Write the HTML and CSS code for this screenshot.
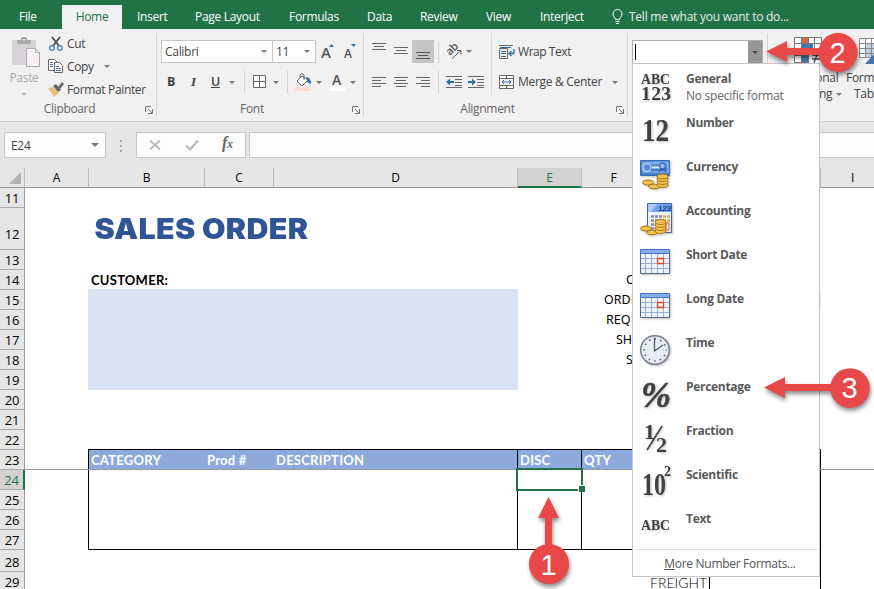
FILE: index.html
```html
<!DOCTYPE html>
<html lang="en">
<head>
<meta charset="utf-8">
<title>Sales Order - Excel</title>
<link rel="stylesheet" href="styles.css">
</head>
<body>
<div class="window">
  <nav class="tabs">
    <span class="tab-file">File</span>
    <span class="tab-home">Home</span>
    <span>Insert</span>
    <span>Page Layout</span>
    <span>Formulas</span>
    <span>Data</span>
    <span>Review</span>
    <span>View</span>
    <span>Interject</span>
    <svg class="bulb" width="12" height="16" viewBox="0 0 12 16" fill="none" stroke="#fff"><path d="M3.5 10.500C3.500 8.500 1 8 1 5a4.500 4.500 0 0 1 9 0C10 8 7.500 8.500 7.500 10.500zM3.500 12.500h4M4 14.500h3"/></svg>
    <span class="tell">Tell me what you want to do...</span>
  </nav>

  <div class="ribbon">
    <section class="group clipboard">
      <div class="group-body clip-body">
        <div class="paste">
          <svg width="28" height="31" viewBox="0 0 28 31"><rect y="3" width="24" height="25" rx="1" fill="#d8d5d8"/><path d="M5 7V3h4V1.500q0-1.500 1.500-1.500h3Q15 0 15 1.500V3h4v4z" fill="#ababab"/><circle cx="12" cy="2.800" r="1" fill="#eee"/><path d="M14.500 11.500h9l4 4v14h-13z" fill="#f7f0f7" stroke="#aaa"/><path d="M23.500 11.500v4h4" fill="none" stroke="#aaa"/></svg>
          <span>Paste</span>
          <i class="arr"></i>
        </div>
        <div class="clip-list">
          <div><svg width="16" height="16" viewBox="0 0 16 16" fill="none"><path d="M4 1l7 9M12 1L5 10" stroke="#555" stroke-width="2"/><circle cx="4" cy="12" r="2.400" stroke="#4a81b8" stroke-width="1.300"/><circle cx="11.800" cy="12" r="2.400" stroke="#4a81b8" stroke-width="1.300"/></svg><span>Cut</span></div>
          <div><svg width="16" height="16" viewBox="0 0 16 16"><g fill="#fff" stroke="#666"><path d="M.5.500h6l3 3v8h-9z"/><path d="M6.500 3.500h5l3 3v7h-8z"/></g><path d="M2 3.500h3M2 5.500h3M2 7.500h3M8 7.500h3M8 9.500h5M8 11.500h5" stroke="#3f78b5"/></svg><span>Copy</span><i class="arr"></i></div>
          <div><svg width="16" height="16" viewBox="0 0 16 16"><path d="M0 6l5-1 6 6-5 4z" fill="#eabf7c"/><path d="M5 4l3-2 5 6-3 2z" fill="#666"/><path d="M10 5l4-5 2 2-4 5z" fill="#666"/></svg><span>Format Painter</span></div>
        </div>
      </div>
      <div class="group-foot clip-foot"><span>Clipboard</span><svg class="launch" width="8" height="8" viewBox="0 0 8 8"><path d="M.5 6V.500H6M3 3l4 4M7.500 3v4.500H3" fill="none" stroke="#777"/></svg></div>
    </section>

    <section class="group font">
      <div class="group-body">
        <div class="row-a font-a">
          <div class="box face"><span>Calibri</span><i class="arr"></i></div>
          <div class="box size"><span>11</span><i class="arr"></i></div>
          <svg width="14" height="18" viewBox="0 0 14 18"><text x="0" y="15" class="ico-a" font-size="15">A</text><path d="M8 4l2.500-3L13 4z" fill="#2f6cad"/></svg>
          <svg width="14" height="18" viewBox="0 0 14 18"><text x="0" y="15" class="ico-a" font-size="12">A</text><path d="M7 1h5L9.500 4z" fill="#2f6cad"/></svg>
        </div>
        <div class="row-b font-b">
          <b>B</b><em>I</em><u>U</u><i class="arr"></i><i class="sep"></i>
          <svg width="14" height="14" viewBox="0 0 14 14" fill="#fff" stroke="#666"><path d="M.5.500h12v12H.500zM6.500.500v12M.500 6.500h12"/></svg>
          <i class="arr"></i><i class="sep"></i>
          <svg width="17" height="18" viewBox="0 0 17 18"><path d="M0 14h16v4H0z" fill="#fbdfd3"/><path d="M11 4q5 0 5 7l-4-2z" fill="#2f6cad"/><path d="M7 3L2 8l5 5 6-6z" fill="#fff" stroke="#666"/><path d="M5 5V2q2-3 4 0v5" fill="none" stroke="#666"/></svg>
          <i class="arr"></i>
          <svg width="16" height="18" viewBox="0 0 16 18"><text x="3" y="12" class="ico-a" font-size="14">A</text><path d="M0 14h16v4H0z" fill="#fff"/></svg>
          <i class="arr"></i>
        </div>
      </div>
      <div class="group-foot"><span>Font</span><svg class="launch" width="8" height="8" viewBox="0 0 8 8"><path d="M.5 6V.500H6M3 3l4 4M7.500 3v4.500H3" fill="none" stroke="#777"/></svg></div>
    </section>

    <section class="group align">
      <div class="group-body align-body">
        <div class="align-left">
          <div class="row-a align-a">
            <svg width="14" height="23" viewBox="0 0 14 23" stroke="#666"><path d="M0 3.500h14M2 6.500h10M0 9.500h14"/></svg>
            <svg width="14" height="23" viewBox="0 0 14 23" stroke="#666"><path d="M0 7.500h14M2 10.500h10M0 13.500h14"/></svg>
            <svg class="pressed" width="22" height="23" viewBox="0 0 22 23" stroke="#555"><path d="M4 12.500h14M6 15.500h10M4 18.500h14"/></svg>
            <i class="sep"></i>
            <svg width="17" height="16" viewBox="0 0 17 16"><text x="0" y="0" transform="translate(4 12) rotate(-45)" class="ico-ab">ab</text><path d="M6 14.500l9-8M11 6.500h4v4" fill="none" stroke="#555"/></svg>
            <i class="arr"></i>
          </div>
          <div class="row-b align-b">
            <svg width="14" height="12" viewBox="0 0 14 12" stroke="#666"><path d="M0 1.500h14M0 4.500h9M0 7.500h14M0 10.500h9"/></svg>
            <svg width="14" height="12" viewBox="0 0 14 12" stroke="#666"><path d="M0 1.500h14M2 4.500h10M0 7.500h14M2 10.500h10"/></svg>
            <svg width="14" height="12" viewBox="0 0 14 12" stroke="#666"><path d="M0 1.500h14M5 4.500h9M0 7.500h14M5 10.500h9"/></svg>
            <i class="sep"></i>
            <svg width="16" height="14" viewBox="0 0 16 14"><path d="M0 1.500h16M9 4.500h7M9 7.500h7M9 10.500h7M0 12.500h16" stroke="#666"/><path d="M0 7l4-3.500V6h4v2H4v2.500z" fill="#2f6cad"/></svg>
            <svg width="16" height="14" viewBox="0 0 16 14"><path d="M0 1.500h16M9 4.500h7M9 7.500h7M9 10.500h7M0 12.500h16" stroke="#666"/><path d="M8 7L4 3.500V6H0v2h4v2.500z" fill="#2f6cad"/></svg>
          </div>
        </div>
        <div class="align-right">
          <div class="row-a"><svg width="16" height="16" viewBox="0 0 16 16" fill="none"><path d="M0 1.500h14M.5 4.500h8v10h-8zM2 7.500h5M2 9.500h4M2 12.500h5" stroke="#666"/><path d="M1 3.500h11M2 7.500h5M2 9.500h5" stroke="#2f6cad"/><path d="M15 5v4.500h-5M12.500 7L10 9.500l2.500 2.500" stroke="#2f6cad" stroke-width="1.400"/></svg><span>Wrap Text</span></div>
          <div class="row-b"><svg width="15" height="16" viewBox="0 0 15 16" fill="#fff" stroke="#666"><path d="M.5 1.500h14v13H.500zM.500 4.500h14M.500 11.500h14M7.500 1.500v3M7.500 11.500v3"/><path d="M3 8h9M5 6L3 8l2 2M10 6l2 2-2 2" fill="none" stroke="#2f6cad"/></svg><span class="t-merge">Merge &amp; Center</span><i class="arr"></i></div>
        </div>
      </div>
      <div class="group-foot"><span>Alignment</span><svg class="launch" width="8" height="8" viewBox="0 0 8 8"><path d="M.5 6V.500H6M3 3l4 4M7.500 3v4.500H3" fill="none" stroke="#777"/></svg></div>
    </section>

    <section class="group number">
      <div class="combo"><span class="caret"></span><span class="combo-btn"><i class="arr"></i></span></div>
    </section>

    <section class="group styles">
      <div class="style-btn">
        <svg width="28" height="26" viewBox="0 0 28 26"><path d="M.5.500h27v25H.500z" fill="#fff"/><path d="M8 1h6v5H8z" fill="#d9643f"/><path d="M8 7h11v5H8zM8 13h6v12H8z" fill="#3f78b5"/><path d="M.5.500h27v25H.500zM.500 6.500h27M.500 12.500h27M.500 18.500h27M7.500.500v25M14.500.500v25M20.500.500v25" fill="none" stroke="#777"/><path d="M15 14h13v12H15z" fill="#fff"/><path d="M18 18h8M18 22h8M24 15l-4 11" stroke="#444" stroke-width="1.300"/></svg>
        <span>Conditional</span><span>Formatting <i class="arr"></i></span>
      </div>
      <div class="style-btn fmt">
        <svg width="30" height="28" viewBox="0 0 30 28"><path d="M.5 2.500h29v19H.500z" fill="#fff"/><path d="M6 8h24v14H6z" fill="#bdd0e9"/><path d="M.5 2.500h29v19H.500zM.500 7.500h29M.500 12.500h29M.500 17.500h29M6.500 2.500v19M12.500 2.500v19M18.500 2.500v19" fill="none" stroke="#888"/><path d="M6 28l9-10v10z" fill="#3f78b5"/></svg>
        <span>Format as</span><span class="tbl">Table</span>
      </div>
    </section>
  </div>

  <div class="formula-bar">
    <div class="name-box"><span>E24</span><i class="arr big"></i></div>
    <svg class="dots" width="3" height="12" viewBox="0 0 3 12" fill="#aaa"><path d="M0 0h2v2H0zM0 5h2v2H0zM0 10h2v2H0z"/></svg>
    <div class="fx-box">
      <svg width="12" height="12" viewBox="0 0 12 12" fill="none" stroke="#bbb" stroke-width="2"><path d="M1 1.500l10 9M11 1.500l-10 9"/></svg>
      <svg width="14" height="12" viewBox="0 0 14 12" fill="none" stroke="#bbb" stroke-width="2.400"><path d="M1 6.500l4 4L13 1.500"/></svg>
      <span class="fx">f<small>x</small></span>
    </div>
    <div class="formula-input"></div>
  </div>

  <div class="sheet">
    <div class="ch corner"><svg width="12" height="12" viewBox="0 0 12 12"><path d="M12 0v12H0z" fill="#b2b2b2"/></svg></div>
    <div class="ch">A</div><div class="ch">B</div><div class="ch">C</div><div class="ch">D</div><div class="ch sel">E</div><div class="ch">F</div><div class="ch">G</div><div class="ch">H</div><div class="ch last">I</div>

    <div class="rh">11</div><div class="rh r12">12</div><div class="rh">13</div><div class="rh">14</div><div class="rh">15</div><div class="rh">16</div><div class="rh">17</div><div class="rh">18</div><div class="rh">19</div><div class="rh">20</div><div class="rh">21</div><div class="rh">22</div><div class="rh">23</div><div class="rh sel">24</div><div class="rh">25</div><div class="rh">26</div><div class="rh">27</div><div class="rh">28</div><div class="rh">29</div>

    <h1 class="title">SALES ORDER</h1>
    <div class="customer">CUSTOMER:</div>
    <div class="customer-area"></div>
    <div class="fl f14">ORDER #:</div><div class="fl f15">ORDER DATE:</div><div class="fl f16">REQ DATE:</div><div class="fl f17">SHIP VIA:</div><div class="fl f18">SHIP TO:</div>
    <div class="peach"></div>

    <div class="th th-b">CATEGORY</div><div class="th th-c">Prod #</div><div class="th th-d">DESCRIPTION</div><div class="th th-e">DISC</div><div class="th th-f">QTY</div>
    <div class="td td-b"></div><div class="td td-e"></div><div class="td td-f"></div>
    <div class="edge"></div>
    <div class="freeze"></div>
    <div class="active-cell"></div>
    <div class="freight">FREIGHT</div>
  </div>
</div>

<div class="menu">
  <div class="item"><svg width="34" height="32"><text x="1" y="12.500" class="num" font-size="15" textLength="29" lengthAdjust="spacingAndGlyphs">ABC</text><text x="1" y="28.500" class="num" font-size="19.500" textLength="30">123</text></svg><div><b>General</b><span>No specific format</span></div></div>
  <div class="item"><svg width="34" height="32"><text x="2" y="26" class="num" font-size="32" textLength="27" lengthAdjust="spacingAndGlyphs">12</text></svg><div><b>Number</b></div></div>
  <div class="item"><svg width="34" height="34"><path d="M.5 1.500h29v15H.500z" fill="#5b90d8" stroke="#3b6bb8"/><path d="M1 9h29v7H1z" fill="#477bcb"/><path d="M3 4h25v9H3z" fill="none" stroke="#a9cbf5"/><circle cx="7" cy="8.500" r="4" fill="#5b90d8" stroke="#c9e0ff"/><path d="M12 8.500h8" stroke="#d8e8ff" stroke-width="2"/><circle cx="22.500" cy="7" r="3" fill="#8dbaf2" stroke="#244f93"/><path d="M19 13q3-5 7 0" stroke="#244f93" fill="none"/><g fill="#f3c34d" stroke="#a97415"><ellipse cx="8" cy="23.500" rx="5.500" ry="2.500"/><ellipse cx="14" cy="27.500" rx="5.500" ry="2.300"/><ellipse cx="22.500" cy="26" rx="5.500" ry="2.500"/><ellipse cx="22.500" cy="23" rx="5.500" ry="2.500"/><ellipse cx="22.500" cy="20" rx="5.500" ry="2.500"/><ellipse cx="22.500" cy="17.500" rx="5.500" ry="2.500"/></g></svg><div><b>Currency</b></div></div>
  <div class="item"><svg width="34" height="34"><path d="M7.500.500h24v29h-24z" fill="#eef3fb" stroke="#3b68b0"/><path d="M8 1h23v8H8z" fill="#6fa2f2"/><path d="M8 1h10l-7 8H8z" fill="#a6c8fb"/><text x="18" y="8" font-size="8" class="calc">123</text><path d="M11 13.500h12M11 17.500h12M11 21.500h12M11 25.500h5" stroke="#8290a8" stroke-width="2.500" stroke-dasharray="3 1"/><path d="M23 13.500h7M23 17.500h7" stroke="#e9a544" stroke-width="2.500" stroke-dasharray="3 1"/><path d="M26 20h3v7h-3z" fill="#fff" stroke="#d85035"/><g fill="#f3c34d" stroke="#a97415"><ellipse cx="6" cy="25.500" rx="5.500" ry="2.500"/><ellipse cx="12" cy="29.500" rx="5.500" ry="2.300"/><ellipse cx="20.500" cy="28" rx="5.500" ry="2.500"/><ellipse cx="20.500" cy="25" rx="5.500" ry="2.500"/><ellipse cx="20.500" cy="22" rx="5.500" ry="2.500"/><ellipse cx="20.500" cy="19" rx="5.500" ry="2.500"/></g></svg><div><b>Accounting</b></div></div>
  <div class="item"><svg width="34" height="34"><path d="M.5 6.500h29v20H.500z" fill="#eef3fb"/><path d="M.5 11.500h29M.500 16.500h29M.500 21.500h29M5.500 7v19M11.500 7v19M17.500 7v19M23.500 7v19" stroke="#9aacc8"/><path d="M.5 6.500v20h29v-20" fill="none" stroke="#566b8c"/><path d="M.5 2.500h29v4H.500z" fill="#85aef3" stroke="#4272c4"/><path d="M17.500 11.500h6v5h-6z" fill="#fff" stroke="#e2451d" stroke-width="1.300"/></svg><div><b>Short Date</b></div></div>
  <div class="item"><svg width="34" height="34"><path d="M.5 6.500h29v20H.500z" fill="#eef3fb"/><path d="M.5 11.500h29M.500 16.500h29M.500 21.500h29M5.500 7v19M11.500 7v19M17.500 7v19M23.500 7v19" stroke="#9aacc8"/><path d="M.5 6.500v20h29v-20" fill="none" stroke="#566b8c"/><path d="M.5 2.500h29v4H.500z" fill="#85aef3" stroke="#4272c4"/><path d="M17.500 11.500h6v5h-6z" fill="#fff" stroke="#e2451d" stroke-width="1.300"/></svg><div><b>Long Date</b></div></div>
  <div class="item"><svg width="34" height="34"><circle cx="15" cy="15" r="14.300" fill="#e7eef7" stroke="#7b8088" stroke-width="1.500"/><circle cx="15" cy="15" r="11" fill="none" stroke="#555" stroke-width="1.600" stroke-dasharray="1.400 4.360" stroke-dashoffset=".7"/><path d="M14.500 2.500V16L23 10" fill="none" stroke="#555" stroke-width="1.300"/></svg><div><b>Time</b></div></div>
  <div class="item"><svg width="34" height="34"><text x="1" y="28" class="num pct" font-size="36" textLength="30" lengthAdjust="spacingAndGlyphs">%</text></svg><div><b>Percentage</b></div></div>
  <div class="item"><svg width="34" height="34"><text x="4" y="16" class="num" font-size="22">1</text><text x="16" y="29" class="num" font-size="22">2</text><path d="M7 27L22 3" stroke="#444" stroke-width="1.600"/></svg><div><b>Fraction</b></div></div>
  <div class="item"><svg width="34" height="34"><text x="2" y="28" class="num" font-size="32" textLength="24" lengthAdjust="spacingAndGlyphs">10</text><text x="24" y="9" class="num" font-size="14">2</text></svg><div><b>Scientific</b></div></div>
  <div class="item"><svg width="34" height="34"><text x="1" y="18.500" class="num" font-size="15" textLength="29" lengthAdjust="spacingAndGlyphs">ABC</text></svg><div><b>Text</b></div></div>
  <div class="more"><span><u>M</u>ore Number Formats...</span></div>
</div>

<svg class="callouts" width="874" height="589" viewBox="0 0 874 589">
  <g class="mark"><path d="M766 51.500L787 41v7h35v7h-35v7z"/><circle cx="838" cy="52.500" r="19.500"/></g>
  <g class="mark"><path d="M764 387.500L785 377v7h48v7h-48v7z"/><circle cx="850" cy="388" r="19.800"/></g>
  <g class="mark"><path d="M548.500 497L559 518h-7v28h-7v-28h-7z"/><circle cx="549" cy="564" r="20"/></g>
  <g class="digits"><text x="837.500" y="63">2</text><text x="849.500" y="398">3</text><text x="548.500" y="574.500">1</text></g>
</svg>
</body>
</html>
```
FILE: styles.css
```css
* { box-sizing: border-box; }
body {
  margin: 0;
  width: 874px;
  height: 589px;
  overflow: hidden;
  position: relative;
  background: #fff;
  font: 12px/16px "Open Sans", "Noto Sans", sans-serif;
  letter-spacing: -0.3px;
  color: #444;
}
svg { display: block; flex: none; }
.window { height: 589px; overflow: hidden; }

/* drop-down triangle shared by every control */
.arr { display: block; width: 0; height: 0; flex: none; border: 3px solid transparent; border-top-color: #777; border-bottom: 0; }
.arr.big { border-width: 4px; border-bottom: 0; }
.sep { width: 1px; height: 22px; background: #d2d2d2; }

/* tab strip */
.tabs {
  height: 29px;
  background: #217346;
  color: #fff;
  display: grid;
  grid-template-columns: 62px 75px 58px 94px 78px 53px 66px 54px 72px 17px 1fr;
  white-space: nowrap;
  line-height: 34px;
}
.tab-file { padding-left: 19px; }
.tab-home { background: #f1f1f1; color: #217346; width: 60px; height: 24px; margin-top: 5px; line-height: 24px; text-align: center; }
.bulb { margin-top: 9px; }
.tell { color: #e3efe8; letter-spacing: -0.25px; }

/* ribbon */
.ribbon { height: 93px; background: #f1f1f1; border-bottom: 1px solid #d2d2d2; display: flex; padding-top: 4px; }
.group { height: 84px; border-right: 1px solid #d2d2d2; flex: none; display: flex; flex-direction: column; white-space: nowrap; }
.clipboard { width: 157px; }
.font { width: 207px; }
.align { width: 264px; }
.number { width: 140px; padding: 7px 0 0 4px; }
.styles { width: 200px; border: 0; flex-direction: row; padding: 4px 0 0 6px; }
.group-body { height: 71px; }
.group-foot { display: grid; align-items: center; height: 18px; color: #666; }
.group-foot > * { grid-area: 1 / 1; }
.group-foot span { justify-self: center; margin-right: 16px; }
.clip-foot { letter-spacing: -0.35px; }
.clip-foot span { margin-right: 17px; }
.launch { justify-self: end; margin: 2px 3px 0 0; }

.clip-body { display: flex; }
.paste { width: 48px; padding-top: 4px; display: flex; flex-direction: column; align-items: center; color: #aaa; }
.paste svg { margin-left: 4px; }
.paste span { margin-top: 1px; line-height: 17px; }
.paste .arr { margin-top: 7px; border-top-color: #bbb; }
.clip-list { margin-top: -1px; letter-spacing: -0.35px; }
.clip-list > div { display: flex; align-items: center; height: 23px; gap: 3px; }
.clip-list .arr { margin-left: 7px; }

.row-a { height: 23px; margin-top: 7px; display: flex; align-items: center; }
.row-b { height: 22px; margin-top: 8px; display: flex; align-items: center; }
.font-a { padding-left: 4px; }
.font-a svg { margin-left: 5px; }
.font-a svg + svg { margin-left: 9px; }
.box { height: 23px; background: #fff; border: 1px solid #c6c6c6; display: flex; align-items: center; justify-content: space-between; padding: 0 5px 0 3px; }
.face { width: 112px; }
.size { width: 43px; border-left: 0; }
.font-b { display: grid; grid-template-columns: 22px 22px 18px 15px 9px 20px 14px 8px 21px 13px 21px 10px; padding-left: 10px; font-size: 12.5px; align-items: center; }
.font-b em { font-family: "Liberation Serif", serif; font-size: 13px; font-weight: bold; padding-left: 2px; }
.font-b u { font-weight: 600; }
.ico-a { font-family: "Open Sans", sans-serif; font-weight: 600; fill: #555; }
.ico-ab { font: 600 11px "Open Sans", sans-serif; fill: #555; letter-spacing: -0.5px; }

.align-body { display: flex; }
.align-left { width: 128px; border-right: 1px solid #dcdcdc; height: 62px; }
.align-a { display: grid; grid-template-columns: 22px 18px 26px 8px 20px 10px; padding-left: 8px; }
.align-b { display: grid; grid-template-columns: 22px 22px 22px 8px 22px 16px; padding-left: 8px; }
.pressed { background: #c5c5c5; }
.align-right { padding-left: 7px; }
.align-right .row-a { gap: 3px; letter-spacing: -0.45px; }
.align-right .row-b { gap: 4px; }
.align-right .arr { margin-left: 6px; }

.combo { width: 131px; height: 24px; background: #fff; border: 1px solid #ababab; display: flex; align-items: center; }
.caret { width: 1px; height: 16px; background: #000; margin-left: 2px; }
.combo-btn { margin-left: auto; width: 14px; height: 22px; background: #969696; display: grid; place-items: center; }
.combo-btn .arr { border-top-color: #444; }
.style-btn { width: 68px; display: flex; flex-direction: column; align-items: center; }
.style-btn svg { margin-bottom: 7px; }
.style-btn span { display: flex; align-items: center; gap: 4px; }
.fmt { align-items: flex-start; padding-left: 4px; }
.fmt svg { margin: -1px 0 6px 13px; }
.tbl { margin-left: 8px; }

/* formula bar */
.formula-bar { height: 46px; background: #e6e6e6; display: flex; padding: 10px 0 0 4px; }
.name-box, .fx-box, .formula-input { height: 26px; background: #fdfdfd; border: 1px solid #c6c6c6; display: flex; align-items: center; }
.name-box { width: 102px; justify-content: space-between; padding: 0 6px; }
.name-box span { margin-top: 1px; }
.dots { margin: 8px 14px 0; }
.fx-box { width: 110px; padding-left: 12px; margin-left: -1px; }
.fx-box svg + svg { margin-left: 24px; }
.fx { font: italic bold 16px/18px "Liberation Serif", serif; color: #666; margin: -3px 0 0 23px; }
.fx small { font-size: 12px; }
.formula-input { margin-left: 3px; flex: 1; border-right: 0; }

/* worksheet */
.sheet {
  display: grid;
  width: 885px;
  grid-template-columns: 25px 64px 116px 69px 244px 64px 64px 88px 87px 64px;
  grid-template-rows: 20px 20px 42px repeat(15, 20px) 22px 20px;
  color: #000;
}
.ch { grid-row: 1; background: #e6e6e6; border-bottom: 1px solid #999; border-right: 1px solid #bbb; text-align: center; line-height: 20px; }
.corner { display: flex; justify-content: flex-end; padding: 4px 3px 0 0; }
.ch.sel { background: #d2d2d2; color: #217346; border-bottom: 2px solid #217346; }
.rh { grid-column: 1; background: #e6e6e6; border-right: 1px solid #999; border-bottom: 1px solid #aaa; display: flex; align-items: flex-end; justify-content: center; line-height: 18px; font-size: 13px; }
.r12 { padding-bottom: 6px; }
.rh.sel { background: #d2d2d2; color: #217346; border-right: 2px solid #217346; }

.title { grid-area: 3 / 3 / 4 / 6; margin: 0; padding-left: 5px; font: 900 28px/42px Inter, "Liberation Sans", sans-serif; letter-spacing: 0.3px; color: #2f5597; white-space: nowrap; transform: scaleX(1.085); transform-origin: left; }
.customer, .th { font: bold 13px/20px Lato, "Liberation Sans", sans-serif; letter-spacing: 0.25px; padding-left: 2px; white-space: nowrap; }
.customer { grid-area: 5 / 3 / 6 / 5; }
.customer-area { grid-area: 6 / 3 / 11 / 6; background: #d9e1f2; margin: -1px 0 0 -1px; }
.fl { grid-column: 7 / 9; font: 12.5px/20px "Noto Sans", sans-serif; white-space: nowrap; letter-spacing: 0; }
.f14 { grid-row: 5; padding-left: 44px; }
.f15 { grid-row: 6; padding-left: 22px; }
.f16 { grid-row: 7; padding-left: 24px; }
.f17 { grid-row: 8; padding-left: 34px; }
.f18 { grid-row: 9; padding-left: 44px; }
.peach { grid-area: 6 / 10; width: 1px; background: #fbe0d5; margin-left: -1px; }

.th { grid-row: 14; background: #8ea9db; color: #fff; border-top: 1px solid #000; margin-top: -1px; line-height: 21px; }
.th-b { grid-column: 3; border-left: 1px solid #000; margin-left: -1px; }
.th-c { grid-column: 4; }
.th-d { grid-column: 5; }
.th-e { grid-column: 6; border-left: 1px solid #000; margin-left: -1px; }
.th-f { grid-column: 7 / 10; border-left: 1px solid #000; margin-left: -1px; }
.td { grid-row: 15 / 19; border-left: 1px solid #000; border-bottom: 1px solid #000; margin-left: -1px; }
.td-b { grid-column: 3 / 6; }
.td-e { grid-column: 6; }
.td-f { grid-column: 7 / 10; }
.edge { grid-area: 14 / 10 / 21 / 11; border-left: 1px solid #000; margin: -1px 0 0 -1px; }
.freeze { grid-area: 14 / 2 / 15 / 11; border-bottom: 1px solid #999; }
.active-cell { grid-area: 15 / 6; margin: -2px -1px -1px -2px; border: 2px solid #217346; position: relative; }
.active-cell::after { content: ""; position: absolute; right: -4px; bottom: -3px; width: 6px; height: 6px; background: #217346; border: solid #fff; border-width: 1px 0 0 1px; }
.freight { grid-area: 20 / 8; width: 64px; border-right: 1px solid #000; padding-left: 4px; font: 300 14px/22px Lato, sans-serif; letter-spacing: 0; }

/* number format drop-down */
.menu { position: absolute; left: 632px; top: 63px; width: 188px; height: 514px; background: #fff; border: 1px solid #c6c6c6; }
.item { height: 44px; display: flex; padding: 7px 0 0 7px; }
.item > div { padding-left: 12px; margin-top: -1px; white-space: nowrap; }
.item b { display: block; color: #595959; line-height: 17px; }
.item span { display: block; line-height: 17px; color: #666; letter-spacing: -0.25px; }
.item svg { overflow: visible; filter: drop-shadow(1px 1px 1px rgba(0, 0, 0, 0.25)); }
.num { font-family: "Liberation Serif", serif; font-weight: bold; fill: #404040; letter-spacing: 0; }
.pct { font-style: italic; stroke: #404040; stroke-width: 0.5px; }
.calc { font-family: "Liberation Mono", monospace; font-weight: bold; fill: #1c3f86; letter-spacing: -0.5px; }
.more { border-top: 1px solid #e1e1e1; margin: 1px 1px 0; height: 27px; line-height: 27px; text-align: center; color: #555; padding-left: 8px; }

/* numbered callouts */
.callouts { position: absolute; left: 0; top: 0; }
.mark { fill: #e84848; filter: drop-shadow(1px 3px 2px rgba(0, 0, 0, 0.45)); }
.digits { fill: #fff; font: 29px "Liberation Sans", sans-serif; text-anchor: middle; letter-spacing: 0; }
```
